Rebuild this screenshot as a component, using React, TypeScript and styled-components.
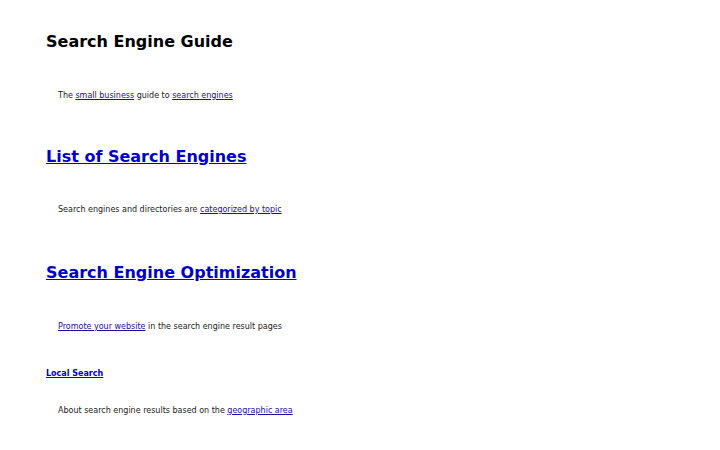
import React from "react";
import styled, { createGlobalStyle } from "styled-components";

const Global = createGlobalStyle`
  html, body { margin: 0; padding: 0; background: #fff; }
  body { font-family: "DejaVu Sans", sans-serif; color: #000; }
`;

const Page = styled.div`
  padding: 31px 46px 0 46px;
  display: flex;
  flex-direction: column;
`;

const Title = styled.h1`
  margin: 0;
  font-size: 16px;
  font-weight: bold;
  line-height: 22px;
  color: #000;
`;

const SectionTitle = styled.h2<{ $small?: boolean }>`
  margin: 0;
  font-size: ${(p) => (p.$small ? "8px" : "16px")};
  font-weight: bold;
  line-height: ${(p) => (p.$small ? "14px" : "22px")};
  a { color: #0000cc; text-decoration: underline; }
`;

const Blurb = styled.p`
  margin: 0;
  padding-left: 12px;
  font-size: 8px;
  line-height: 14px;
  color: #222;
  a { color: #1a0dab; }
`;

const Block = styled.section<{ $gap: number; $after: number }>`
  display: flex;
  flex-direction: column;
  gap: ${(p) => p.$gap}px;
  margin-bottom: ${(p) => p.$after}px;
`;

export default function App() {
  return (
    <>
      <Global />
      <Page>
        <Block $gap={36} $after={43}>
          <Title>Search Engine Guide</Title>
          <Blurb>
            The <a href="#">small business</a> guide to <a href="#">search engines</a>
          </Blurb>
        </Block>
        <Block $gap={35} $after={45}>
          <SectionTitle><a href="#">List of Search Engines</a></SectionTitle>
          <Blurb>
            Search engines and directories are <a href="#">categorized by topic</a>
          </Blurb>
        </Block>
        <Block $gap={36} $after={33}>
          <SectionTitle><a href="#">Search Engine Optimization</a></SectionTitle>
          <Blurb>
            <a href="#">Promote your website</a> in the search engine result pages
          </Blurb>
        </Block>
        <Block $gap={23} $after={0}>
          <SectionTitle $small><a href="#">Local Search</a></SectionTitle>
          <Blurb>
            About search engine results based on the <a href="#">geographic area</a>
          </Blurb>
        </Block>
      </Page>
    </>
  );
}
